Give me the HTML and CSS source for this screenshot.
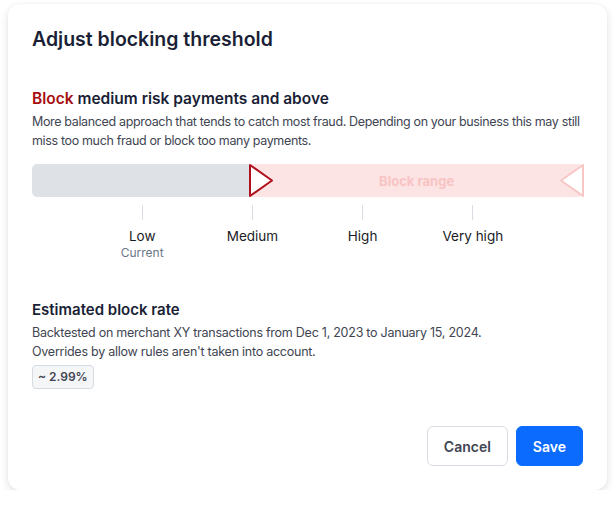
FILE: index.html
```html
<!DOCTYPE html>
<html lang="en">
<head>
    <meta charset="UTF-8">
    <meta name="viewport" content="width=device-width, initial-scale=1.0">
    <title>Adjust blocking threshold</title>
    <link rel="stylesheet" href="styles.css">
</head>
<body>
    <div class="dialog">
        <div class="title">Adjust blocking threshold</div>

        <div class="section">
            <div class="heading"><span class="danger">Block</span> medium risk payments and above</div>
            <p class="text nowrap">More balanced approach that tends to catch most fraud. Depending on your business this may still<br>miss too much fraud or block too many payments.</p>
        </div>

        <div class="slider">
            <div class="track">
                <div class="allowed"></div>
                <div class="blocked">Block range</div>
                <svg class="handle handle-start" viewBox="0 0 26 35">
                    <path d="M2 2 L2 33 L24 17.5 Z"/>
                </svg>
                <svg class="handle handle-end" viewBox="0 0 26 35">
                    <path d="M24 2 L24 33 L2 17.5 Z"/>
                </svg>
            </div>
            <div class="levels">
                <div class="level"><span class="tick"></span>Low<span class="note">Current</span></div>
                <div class="level"><span class="tick"></span>Medium</div>
                <div class="level"><span class="tick"></span>High</div>
                <div class="level"><span class="tick"></span>Very high</div>
            </div>
        </div>

        <div class="estimate">
            <div class="subheading">Estimated block rate</div>
            <p class="text">Backtested on merchant XY transactions from Dec 1, 2023 to January 15, 2024.<br>Overrides by allow rules aren't taken into account.</p>
            <span class="badge">~ 2.99%</span>
        </div>

        <div class="actions">
            <button class="btn btn-secondary">Cancel</button>
            <button class="btn btn-primary">Save</button>
        </div>
    </div>
</body>
</html>
```

FILE: styles.css
```css
* {
    margin: 0;
    padding: 0;
    box-sizing: border-box;
}

body {
    font-family: Inter, "Noto Sans", sans-serif;
    background: #ffffff;
    padding: 4px 9px 0 8px;
    color: #1a1f36;
}

.dialog {
    background: white;
    border-radius: 12px;
    box-shadow: 0 3px 8px rgba(0, 0, 0, 0.12), 0 0 2px rgba(0, 0, 0, 0.06);
    padding: 21px 24px 24px;
    height: 486px;
}

.title {
    font-size: 19.5px;
    line-height: 28px;
    font-weight: 600;
    color: #1a1f36;
}

.section {
    margin-top: 34px;
}

.heading {
    font-size: 15.5px;
    line-height: 24px;
    font-weight: 600;
}

.danger {
    color: #a50e0e;
}

.text {
    font-size: 12.5px;
    letter-spacing: -0.25px;
    line-height: 19px;
    color: #414552;
    margin-top: 1px;
}

.nowrap {
    white-space: nowrap;
    letter-spacing: -0.35px;
}

.slider {
    margin-top: 14px;
}

.track {
    position: relative;
    display: flex;
    height: 33px;
    border-radius: 5px;
}

.allowed {
    width: 39.6%;
    background: #dee1e6;
    border-radius: 5px 0 0 5px;
}

.blocked {
    flex: 1;
    background: #fde4e4;
    border-radius: 0 5px 5px 0;
    color: #f8c3c3;
    font-size: 13px;
    font-weight: 700;
    display: flex;
    align-items: center;
    justify-content: center;
}

.handle {
    position: absolute;
    top: -1px;
    width: 26px;
    height: 35px;
    fill: white;
    stroke-width: 2;
    stroke-linejoin: round;
}

.handle-start {
    left: calc(39.6% - 2px);
    stroke: #b0101d;
}

.handle-end {
    right: -2px;
    stroke: #f9c6c6;
}

.levels {
    display: grid;
    grid-template-columns: repeat(4, 1fr);
    padding: 0 10%;
}

.level {
    display: flex;
    flex-direction: column;
    align-items: center;
    font-size: 13.5px;
    line-height: 20px;
    color: #1a1b25;
}

.tick {
    width: 1px;
    height: 15px;
    background: #d8dde3;
    margin: 8px 0 6px;
}

.note {
    font-size: 12px;
    line-height: 14px;
    color: #6c7688;
}

.estimate {
    margin-top: 39px;
}

.subheading {
    font-size: 15px;
    line-height: 22px;
    font-weight: 600;
}

.estimate .text {
    margin-top: 2px;
}

.badge {
    display: inline-block;
    margin-top: 4px;
    padding: 3px 5px;
    font-size: 12px;
    line-height: 16px;
    font-weight: 600;
    color: #414552;
    background: #f5f6f8;
    border: 1px solid #d5dbe1;
    border-radius: 4px;
}

.actions {
    display: flex;
    justify-content: flex-end;
    gap: 8px;
    margin-top: 37px;
}

.btn {
    font-family: inherit;
    font-size: 14px;
    font-weight: 600;
    height: 40px;
    padding: 0 16px;
    border-radius: 6px;
    cursor: pointer;
}

.btn-secondary {
    background: white;
    color: #414552;
    border: 1px solid #d8dee4;
}

.btn-primary {
    background: #0b6bff;
    color: white;
    border: 1px solid #0b6bff;
}
```
